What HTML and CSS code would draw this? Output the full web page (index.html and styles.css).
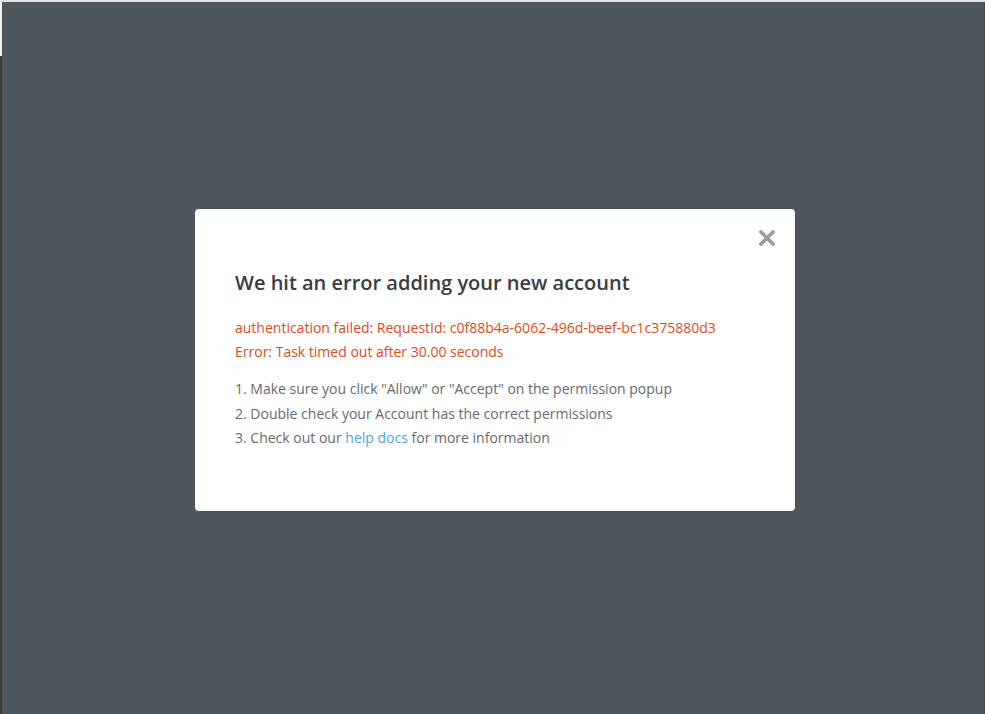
FILE: index.html
```html
<!DOCTYPE html>
<html lang="en">
<head>
<meta charset="utf-8">
<title>Error</title>
<link rel="stylesheet" href="styles.css">
</head>
<body>
<div class="frame">
  <div class="rail"><div class="rail-top"></div><div class="rail-bottom"></div></div>
  <div class="overlay">
    <div class="modal">
      <button class="close" aria-label="Close">
        <svg width="16" height="16" viewBox="0 0 16 16"><path d="M2 2 L14 14 M14 2 L2 14" stroke="#999da0" stroke-width="3.6" stroke-linecap="square" fill="none"/></svg>
      </button>
      <h1 class="title">We hit an error adding your new account</h1>
      <div class="errors">
        <div>authentication failed: RequestId: c0f88b4a-6062-496d-beef-bc1c375880d3</div>
        <div>Error: Task timed out after 30.00 seconds</div>
      </div>
      <ol class="steps">
        <li>1. Make sure you click "Allow" or "Accept" on the permission popup</li>
        <li>2. Double check your Account has the correct permissions</li>
        <li>3. Check out our <a href="#" class="link">help docs</a> for more information</li>
      </ol>
    </div>
  </div>
</div>
</body>
</html>
```
FILE: styles.css
```css
html, body {
  margin: 0;
  padding: 0;
  height: 100%;
}
body {
  font-family: "Open Sans", "Liberation Sans", sans-serif;
  background: #4e565d;
}
.frame {
  display: flex;
  height: 714px;
  border-top: 2px solid #e3e3e3;
  box-sizing: border-box;
}
.rail {
  width: 2px;
  display: flex;
  flex-direction: column;
}
.rail-top {
  height: 54px;
  background: #f0f0f0;
}
.rail-bottom {
  flex: 1;
  background: #3c3637;
}
.overlay {
  flex: 1;
  display: flex;
  align-items: flex-start;
  justify-content: center;
  padding-top: 207px;
  padding-left: 4px;
  border-right: 1px solid #444b51;
}
.modal {
  position: relative;
  width: 600px;
  box-sizing: border-box;
  background: #fff;
  border-radius: 4px;
  padding: 60px 40px 60px;
}
.close {
  position: absolute;
  top: 21px;
  right: 20px;
  border: 0;
  background: none;
  padding: 0;
  width: 16px;
  height: 16px;
  cursor: pointer;
}
.close svg { display: block; }
.title {
  margin: 0;
  font-size: 20px;
  line-height: 28px;
  font-weight: 600;
  color: #363c43;
}
.errors {
  margin-top: 19px;
  font-size: 14px;
  line-height: 24px;
  color: #dd4b22;
}
.steps {
  list-style: none;
  margin: 13px 0 0;
  padding: 0;
  font-size: 14px;
  line-height: 24.5px;
  color: #666a6e;
}
.link {
  color: #4fa3e0;
  text-decoration: none;
}
```
